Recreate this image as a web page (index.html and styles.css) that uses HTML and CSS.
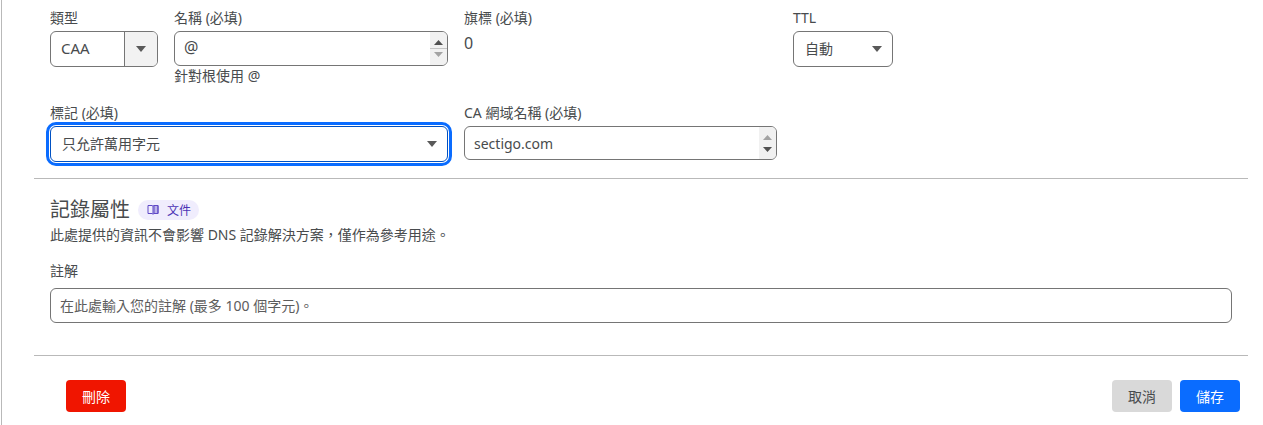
FILE: index.html
```html
<!DOCTYPE html>
<html lang="zh-Hant">
<head>
    <meta charset="UTF-8">
    <meta name="viewport" content="width=device-width, initial-scale=1.0">
    <title>DNS 記錄</title>
    <link rel="stylesheet" href="styles.css">
</head>
<body>
    <div class="panel">
        <div class="record-grid">
            <div class="field">
                <label class="field-label">類型</label>
                <div class="control control-type">
                    <span class="control-value raised large">CAA</span>
                    <span class="type-caret">
                        <svg class="caret" width="10" height="6" viewBox="0 0 10 6"><polygon points="0,0 10,0 5,6"></polygon></svg>
                    </span>
                </div>
            </div>

            <div class="field">
                <label class="field-label">名稱 (必填)</label>
                <div class="control control-name">
                    <span class="control-value raised larger">@</span>
                    <span class="spinner spinner-split">
                        <svg class="arrow" width="9" height="5" viewBox="0 0 9 5"><polygon points="4.5,0 9,5 0,5"></polygon></svg>
                        <svg class="arrow arrow-muted" width="9" height="5" viewBox="0 0 9 5"><polygon points="0,0 9,0 4.5,5"></polygon></svg>
                    </span>
                </div>
                <div class="field-hint">針對根使用 @</div>
            </div>

            <div class="field">
                <label class="field-label">旗標 (必填)</label>
                <div class="static-value">0</div>
            </div>

            <div class="field">
                <label class="field-label">TTL</label>
                <div class="control control-ttl">
                    <span class="control-value raised-small">自動</span>
                    <svg class="caret" width="10" height="6" viewBox="0 0 10 6"><polygon points="0,0 10,0 5,6"></polygon></svg>
                </div>
            </div>

            <div class="field span-2">
                <label class="field-label">標記 (必填)</label>
                <div class="control control-tag">
                    <span class="control-value raised-small">只允許萬用字元</span>
                    <svg class="caret" width="10" height="6" viewBox="0 0 10 6"><polygon points="0,0 10,0 5,6"></polygon></svg>
                </div>
            </div>

            <div class="field">
                <label class="field-label">CA 網域名稱 (必填)</label>
                <div class="control control-domain">
                    <span class="control-value">sectigo.com</span>
                    <span class="spinner">
                        <svg class="arrow arrow-muted" width="9" height="5" viewBox="0 0 9 5"><polygon points="4.5,0 9,5 0,5"></polygon></svg>
                        <svg class="arrow" width="9" height="5" viewBox="0 0 9 5"><polygon points="0,0 9,0 4.5,5"></polygon></svg>
                    </span>
                </div>
            </div>
        </div>

        <hr class="divider">

        <div class="section">
            <div class="section-title">
                <h2>記錄屬性</h2>
                <a class="doc-pill" href="#">
                    <svg width="12" height="11" viewBox="0 0 12 11" fill="none" stroke="currentColor" stroke-width="1">
                        <path d="M1 1.5h4l1 .7 1-.7h4v8H7l-1 .7-1-.7H1z"></path>
                        <path d="M6 2.2v7.5"></path>
                        <path d="M7 1.5h4v8H7z" fill="currentColor" fill-opacity="0.35"></path>
                    </svg>
                    <span>文件</span>
                </a>
            </div>
            <p class="section-desc">此處提供的資訊不會影響 DNS 記錄解決方案，僅作為參考用途。</p>

            <label class="field-label comment-label">註解</label>
            <div class="control control-comment">
                <span class="placeholder">在此處輸入您的註解 (最多 100 個字元)。</span>
            </div>
        </div>

        <hr class="divider divider-bottom">

        <div class="actions">
            <button class="btn btn-danger">刪除</button>
            <div class="actions-right">
                <button class="btn btn-muted">取消</button>
                <button class="btn btn-primary">儲存</button>
            </div>
        </div>
    </div>
</body>
</html>
```

FILE: styles.css
```css
:root {
    --border-color: #757575;
    --line-color: #b9b9b9;
    --text-color: #484b4d;
    --caret-color: #595959;
}

html, body {
    height: 100%;
}

body {
    margin: 0;
    padding: 0;
    overflow: hidden;
    background: white;
    color: var(--text-color);
    font-family: "Noto Sans", "Noto Sans CJK TC", sans-serif;
}

.panel {
    box-sizing: border-box;
    height: 425px;
    margin-left: 1px;
    border-left: 1px solid var(--line-color);
    padding: 11px 15px 0 32px;
}

.record-grid {
    display: grid;
    grid-template-columns: 108px 274px 313px 100px;
    column-gap: 16px;
    row-gap: 18px;
    padding-left: 16px;
}

.field {
    min-height: 77px;
}

.field:nth-child(n+5) {
    min-height: 0;
}

.span-2 {
    grid-column: span 2;
}

.field-label {
    display: block;
    height: 14px;
    margin-bottom: 6px;
    font-size: 14px;
    line-height: 14px;
}

.field-hint {
    margin-top: 2px;
    font-size: 14px;
    line-height: 16px;
}

.static-value {
    margin-top: 8px;
    font-size: 16px;
    line-height: 20px;
}

.control {
    box-sizing: border-box;
    display: flex;
    align-items: center;
    justify-content: space-between;
    border: 1px solid var(--border-color);
    border-radius: 6px;
    background: white;
    overflow: hidden;
}

.control-value {
    font-size: 14px;
}

.control-value.large {
    font-size: 15px;
}

.control-value.larger {
    font-size: 16px;
}

.control-value.raised {
    padding-bottom: 3px;
}

.control-value.raised-small {
    padding-bottom: 2px;
}

.control-type {
    height: 36px;
    padding-left: 10px;
}

.type-caret {
    display: flex;
    align-items: center;
    justify-content: center;
    width: 32px;
    height: 100%;
    border-left: 1px solid var(--border-color);
    background: #f2f2f2;
}

.control-name {
    height: 35px;
    padding-left: 9px;
}

.control-ttl {
    height: 36px;
    padding: 0 10px 0 11px;
}

.control-tag {
    height: 36px;
    padding: 0 10px 0 11px;
    border: 1px solid #0051c3;
    outline: 3px solid #0a6cff;
    outline-offset: 1px;
    overflow: visible;
}

.control-domain {
    height: 34px;
    padding-left: 9px;
}

.caret {
    fill: var(--caret-color);
}

.spinner {
    display: flex;
    flex-direction: column;
    align-items: center;
    justify-content: space-around;
    width: 17px;
    height: 100%;
    padding: 4px 0;
    box-sizing: border-box;
    background: #f1f1f1;
}

.spinner-split {
    background: linear-gradient(#f1f1f1 49%, #c4c4c4 49%, #c4c4c4 52%, #f1f1f1 52%);
}

.arrow {
    fill: #505050;
}

.arrow-muted {
    fill: #a3a3a3;
}

.divider {
    height: 1px;
    margin: 0;
    border: none;
    background: var(--line-color);
}

.record-grid + .divider {
    margin-top: 16px;
}

.section {
    padding: 20px 16px 0;
}

.section-title {
    display: flex;
    align-items: center;
    gap: 8px;
    height: 21px;
}

.section-title h2 {
    margin: 0;
    font-size: 20px;
    font-weight: 400;
    line-height: 21px;
}

.doc-pill {
    display: flex;
    align-items: center;
    gap: 8px;
    height: 20px;
    padding: 0 8px 0 9px;
    border-radius: 10px;
    background: #f0edfd;
    color: #4c34b5;
    font-size: 12px;
    text-decoration: none;
}

.doc-pill svg {
    color: #5f48c6;
}

.section-desc {
    margin: 6px 0 0;
    font-size: 14px;
    line-height: 18px;
}

.comment-label {
    margin-top: 20px;
    margin-bottom: 10px;
}

.control-comment {
    height: 35px;
    padding-left: 9px;
    justify-content: flex-start;
}

.placeholder {
    padding-bottom: 2px;
    color: #5c5c5c;
    font-size: 14px;
}

.divider-bottom {
    margin-top: 32px;
}

.actions {
    display: flex;
    justify-content: space-between;
    padding: 24px 8px 0 32px;
}

.actions-right {
    display: flex;
    gap: 8px;
}

.btn {
    width: 60px;
    height: 32px;
    padding: 0;
    border: none;
    border-radius: 4px;
    font-family: inherit;
    font-size: 14px;
    cursor: pointer;
}

.btn-danger {
    background: #f01500;
    color: white;
}

.btn-muted {
    background: #d9d9d9;
    color: #484b4d;
}

.btn-primary {
    background: #0a6cff;
    color: white;
}
```
